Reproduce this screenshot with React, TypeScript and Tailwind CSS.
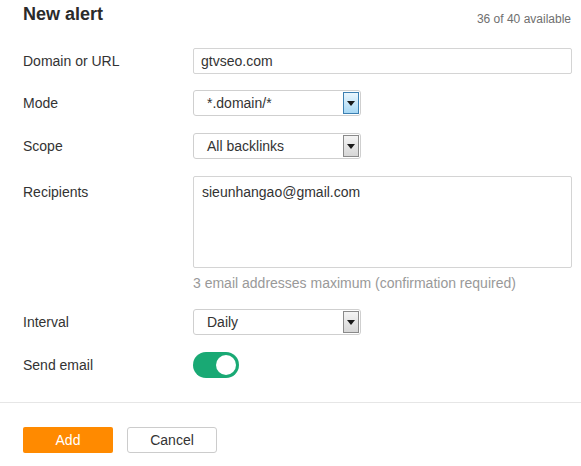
import { FC, ReactNode } from 'react';

const font = { fontFamily: '"Liberation Sans", Arial, sans-serif' };

interface SelectBoxProps {
    value: string;
    active?: boolean;
}

const SelectBox: FC<SelectBoxProps> = ({ value, active }) => {
    return (
        <div className="flex h-[26px] w-[168px] items-stretch rounded-[3px] border border-[#cfcfcf] bg-white">
            <div className="flex flex-1 items-center pl-[13px] text-[14px] leading-4 text-[#333]">
                {value}
            </div>
            <div
                className={
                    active
                        ? 'my-[1px] mr-[1px] flex w-[16px] items-center justify-center border border-[#3c7fb1] bg-gradient-to-b from-[#eaf6fd] to-[#a7d8f4]'
                        : 'my-[1px] mr-[1px] flex w-[16px] items-center justify-center border border-[#8a8a8a] bg-gradient-to-b from-[#f4f4f4] to-[#d6d6d6]'
                }
            >
                <svg width="8" height="5" viewBox="0 0 8 5">
                    <path d="M0 0 L8 0 L4 5 Z" fill="#1a1a1a" />
                </svg>
            </div>
        </div>
    );
};

const Row: FC<{ label: string; className?: string; children: ReactNode }> = ({
    label,
    className,
    children
}) => {
    return (
        <div className={`flex items-center ${className ?? ''}`}>
            <div className="w-[170px] text-[14px] leading-4 text-[#333]">{label}</div>
            {children}
        </div>
    );
};

export default function App() {
    return (
        <div className="h-[466px] w-[581px] bg-white" style={font}>
            <div className="flex h-[48px] items-start justify-between pl-[23px] pr-[10px]">
                <h1 className="pt-[3px] text-[18px] font-bold leading-[22px] text-[#2b2b2b]">
                    New alert
                </h1>
                <span className="mt-[11px] text-[12px] leading-4 text-[#6f6f6f]">
                    36 of 40 available
                </span>
            </div>

            <div className="pl-[23px] pr-[9px]">
                <Row label="Domain or URL">
                    <div className="flex h-[26px] flex-1 items-center rounded-[2px] border border-[#d4d4d4] px-[7px] text-[14px] leading-4 text-[#333]">
                        gtvseo.com
                    </div>
                </Row>
                <Row label="Mode" className="mt-[16px]">
                    <SelectBox value="*.domain/*" active />
                </Row>
                <Row label="Scope" className="mt-[17px]">
                    <SelectBox value="All backlinks" />
                </Row>
                <div className="mt-[17px] flex items-start">
                    <div className="w-[170px] pt-[8px] text-[14px] leading-4 text-[#333]">
                        Recipients
                    </div>
                    <div className="flex-1">
                        <div className="h-[92px] rounded-[2px] border border-[#d4d4d4] px-[8px] pt-[7px] text-[14px] leading-4 text-[#333]">
                            sieunhangao@gmail.com
                        </div>
                        <p className="mt-[7px] text-[14px] leading-4 text-[#999]">
                            3 email addresses maximum (confirmation required)
                        </p>
                    </div>
                </div>
                <Row label="Interval" className="mt-[18px]">
                    <SelectBox value="Daily" />
                </Row>
                <Row label="Send email" className="mt-[17px]">
                    <div className="flex h-[26px] w-[46px] items-center justify-end rounded-full bg-[#19a974] pr-[3px]">
                        <div className="h-[20px] w-[20px] rounded-full bg-white" />
                    </div>
                </Row>
            </div>

            <div className="mt-[24px] h-px bg-[#e6e6e6]" />

            <div className="mt-[24px] flex gap-[14px] pl-[23px]">
                <button className="h-[26px] w-[90px] rounded-[2px] bg-[#ff8a00] text-[14px] text-white">
                    Add
                </button>
                <button className="h-[26px] w-[90px] rounded-[3px] border border-[#cccccc] bg-white text-[14px] text-[#333]">
                    Cancel
                </button>
            </div>
        </div>
    );
}
